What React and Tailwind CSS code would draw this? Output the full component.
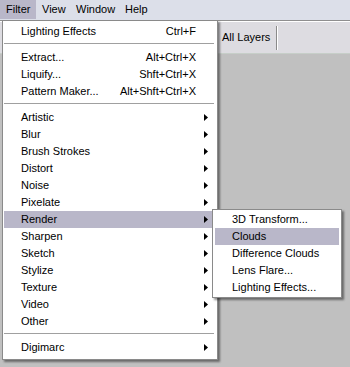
import React from "react";

const Arrow = () => (
  <svg width="4" height="7" viewBox="0 0 4 7" className="block">
    <path d="M0 0 L4 3.5 L0 7 Z" fill="#000" />
  </svg>
);

const Sep = () => (
  <div className="pt-[3px] pb-[4px] pl-[1px]">
    <div className="h-[1px] bg-[#a0a0a0]" />
    <div className="h-[1px] bg-white" />
  </div>
);

const Row = ({ label, shortcut, sub, active }) => (
  <div
    className={
      "h-[17px] flex items-center pl-[17px] pr-[6px] ml-[1px] " +
      (active ? "bg-[#b9b7c9]" : "")
    }
  >
    <span className="flex-1 whitespace-nowrap">{label}</span>
    {shortcut && <span className="whitespace-nowrap mr-[12px]">{shortcut}</span>}
    {sub && <Arrow />}
  </div>
);

export default function App() {
  const menu = [
    ["Artistic"],
    ["Blur"],
    ["Brush Strokes"],
    ["Distort"],
    ["Noise"],
    ["Pixelate"],
    ["Render", true],
    ["Sharpen"],
    ["Sketch"],
    ["Stylize"],
    ["Texture"],
    ["Video"],
    ["Other"],
  ];
  return (
    <div
      className="relative w-[350px] h-[367px] overflow-hidden bg-[#c0c0c0] text-[11px] text-black leading-none"
      style={{ fontFamily: '"Liberation Sans", Arial, sans-serif' }}
    >
      {/* menu bar */}
      <div className="h-[20px] bg-[#dcdfe9] flex">
        <div className="w-[36px] h-[19px] pl-[6px] flex items-center bg-[#b9b7c9]">Filter</div>
        <div className="w-[34px] h-[19px] pl-[6px] flex items-center">View</div>
        <div className="w-[49px] h-[19px] pl-[6px] flex items-center">Window</div>
        <div className="w-[40px] h-[19px] pl-[6px] flex items-center">Help</div>
      </div>
      <div className="h-[1px] bg-[#8f8f8f]" />
      <div className="h-[1px] bg-white" />
      {/* toolbar */}
      <div className="h-[32px] bg-[#dddce1] flex items-center border-b border-[#c6cec8]">
        <div className="ml-[222px] w-[54px]">All Layers</div>
        <div className="flex h-[24px]">
          <div className="w-[1px] bg-[#8a8a8a]" />
          <div className="w-[1px] bg-white" />
        </div>
      </div>

      {/* dropdown */}
      <div className="absolute left-[2px] top-[20px] w-[216px] bg-white border border-[#8a8a8a] pt-[2px] pb-[3px] pr-[3px] shadow-[2px_2px_2px_rgba(0,0,0,0.45)]">
        <Row label="Lighting Effects" shortcut="Ctrl+F" />
        <Sep />
        <Row label="Extract..." shortcut="Alt+Ctrl+X" />
        <Row label="Liquify..." shortcut="Shft+Ctrl+X" />
        <Row label="Pattern Maker..." shortcut="Alt+Shft+Ctrl+X" />
        <Sep />
        {menu.map(([l, a]) => (
          <Row key={l} label={l} sub active={a} />
        ))}
        <Sep />
        <Row label="Digimarc" sub />
      </div>

      {/* submenu */}
      <div className="absolute left-[212px] top-[209px] w-[130px] bg-white border border-[#8a8a8a] pt-[1px] pb-[1px] pl-[2px] pr-[2px] shadow-[2px_2px_2px_rgba(0,0,0,0.45)]">
        {["3D Transform...", "Clouds", "Difference Clouds", "Lens Flare...", "Lighting Effects..."].map(
          (l) => (
            <div
              key={l}
              className={
                "h-[17px] flex items-center pl-[17px] whitespace-nowrap " +
                (l === "Clouds" ? "bg-[#b9b7c9]" : "")
              }
            >
              {l}
            </div>
          )
        )}
      </div>
    </div>
  );
}
